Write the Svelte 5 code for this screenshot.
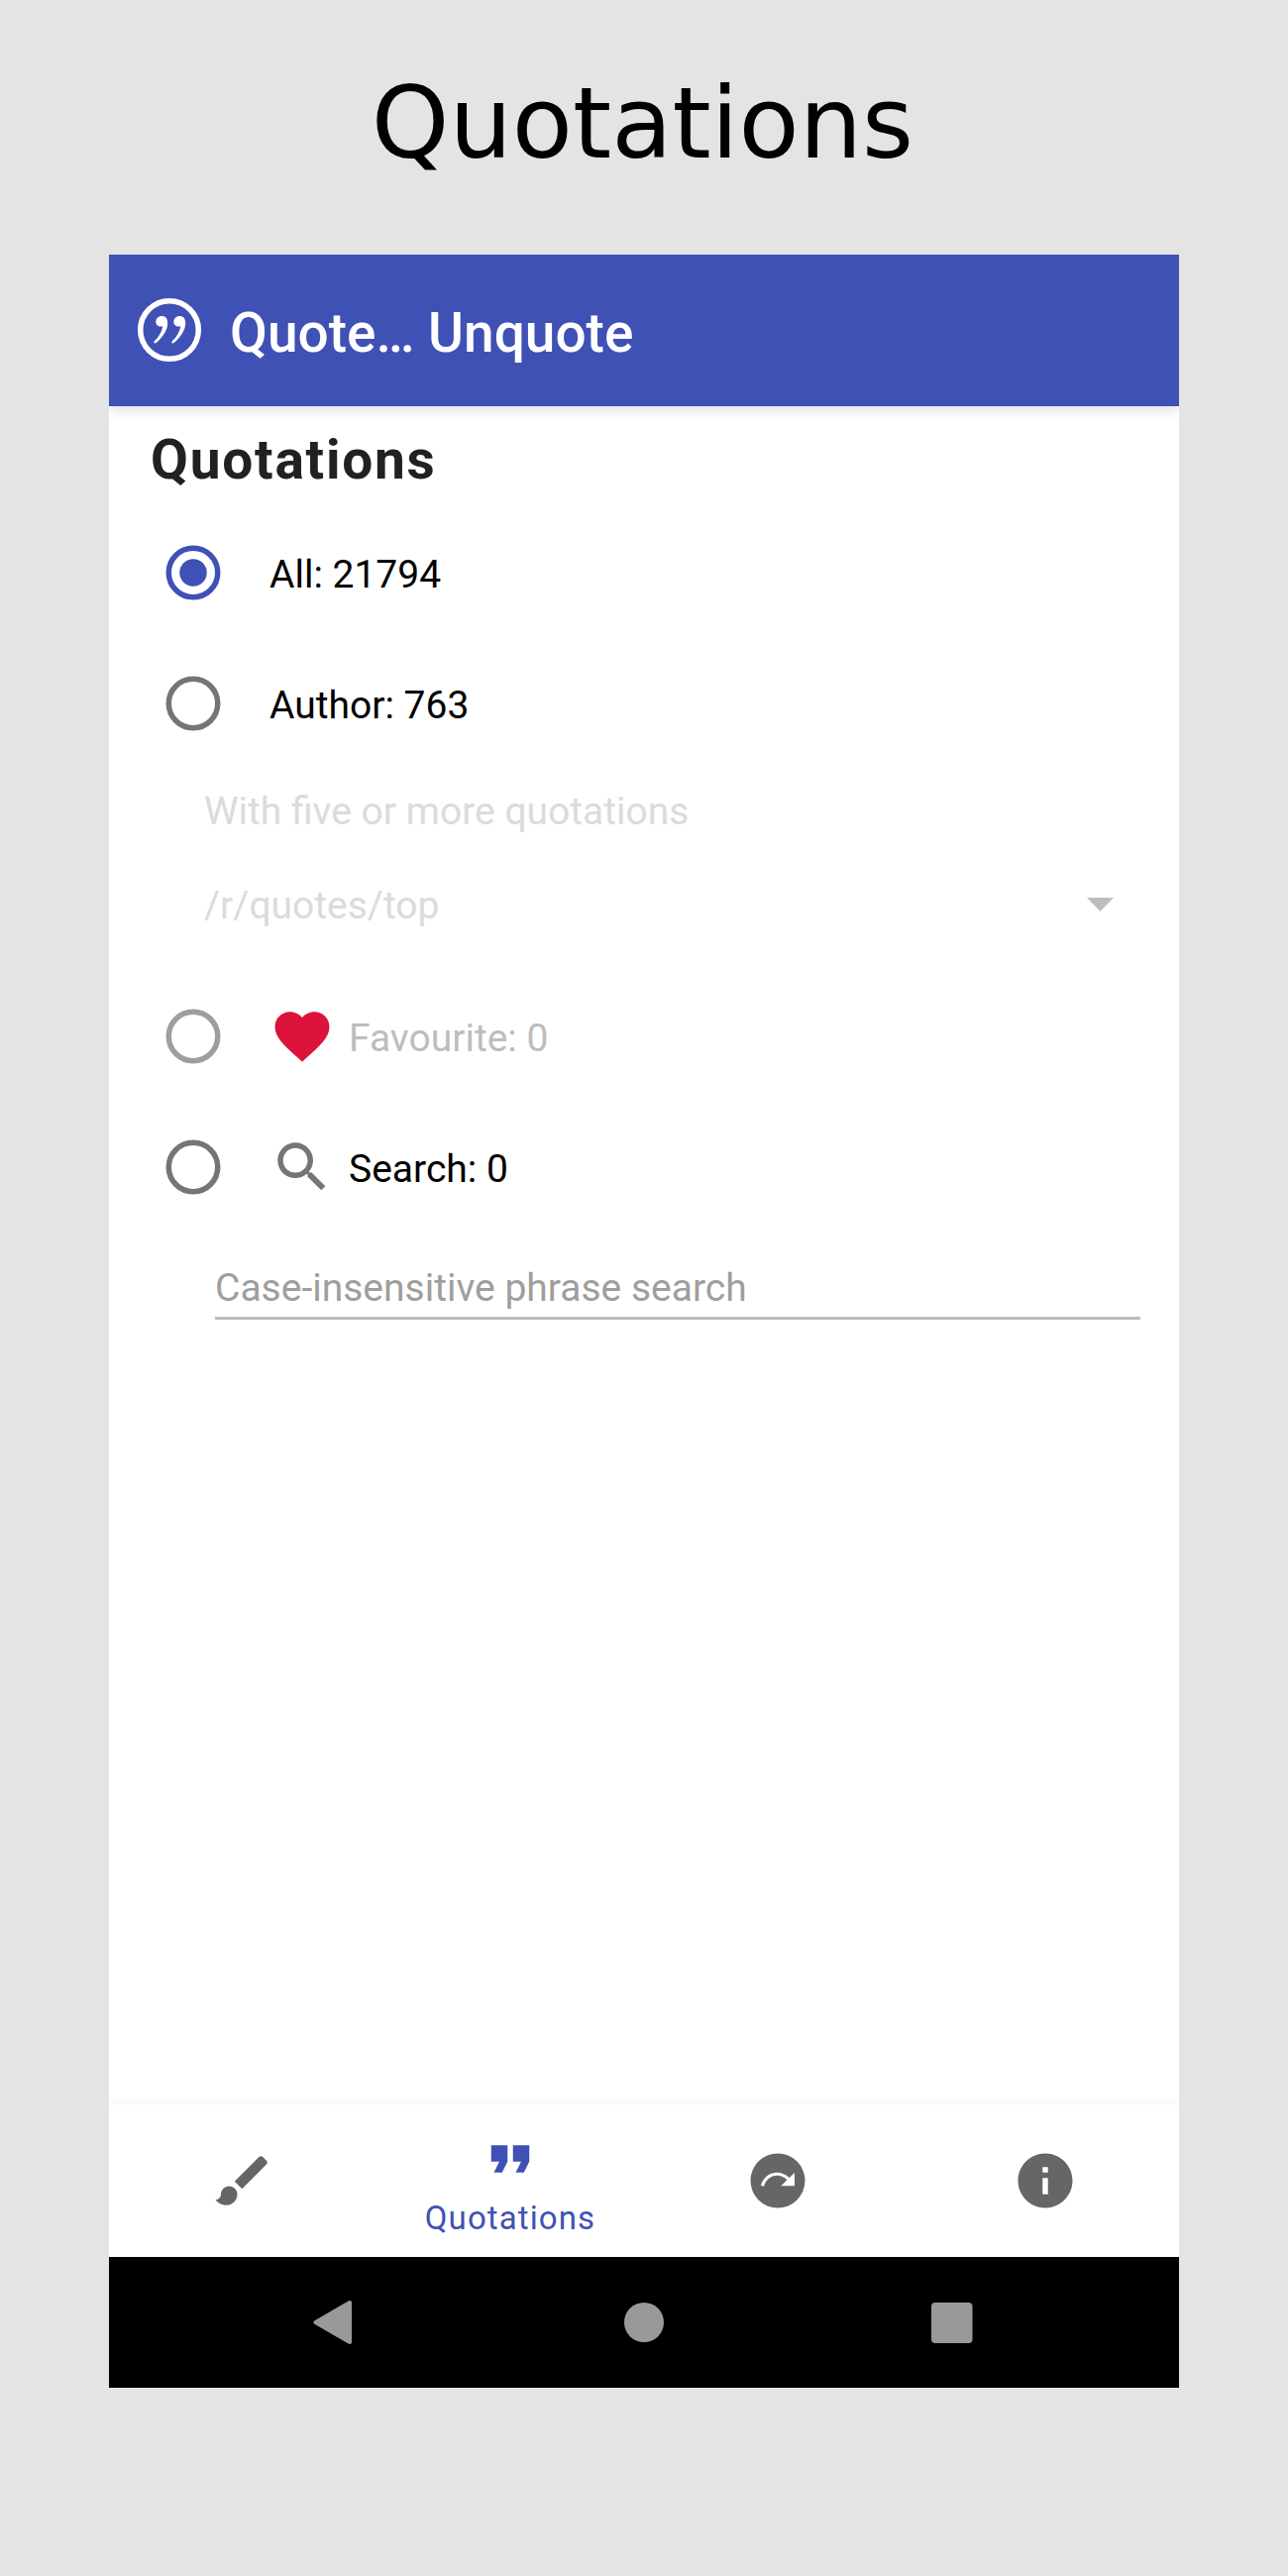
<script>
  const tabs = [
    { id: 'appearance', path: 'M7 14c-1.660 0-3 1.340-3 3 0 1.310-1.160 2-2 2 .92 1.220 2.490 2 4 2 2.210 0 4-1.790 4-4 0-1.660-1.340-3-3-3zm13.710-9.370l-1.340-1.340c-.39-.39-1.020-.39-1.410 0L9 12.250 11.750 15l8.960-8.960c.39-.39.39-1.020 0-1.410z' },
    { id: 'quotations', label: 'Quotations', path: 'M6 17h3l2-4V7H5v6h3zm8 0h3l2-4V7h-6v6h3z' },
    { id: 'schedule' },
    { id: 'about', path: 'M12 2C6.480 2 2 6.480 2 12s4.480 10 10 10 10-4.480 10-10S17.520 2 12 2zm1 15h-2v-6h2v6zm0-8h-2V7h2v2z' }
  ];
</script>

{#snippet radio(checked)}
  <svg class="icon" viewBox="0 0 24 24">
    <circle cx="12" cy="12" r="9" fill="none" stroke="currentColor" stroke-width="2" />
    {#if checked}<circle cx="12" cy="12" r="5" />{/if}
  </svg>
{/snippet}

{#snippet comma()}
  <path d="M25.500 19c4 0 5.700 3 5.700 7 0 7-5 15-12 20.200-1.500.8-2.600-.8-1.400-1.900C22.500 40 25.300 35 26.300 29.300 22.500 30.500 19.300 28 19.300 25c0-3.500 2.600-6 6.200-6z" />
{/snippet}

<div class="page">
  <h1>Quotations</h1>
  <div class="phone">
    <header>
      <svg class="logo" viewBox="0 0 66 66">
        <circle cx="33" cy="33" r="29.300" fill="none" stroke="#fff" stroke-width="5.500" />
        <g fill="#fff">
          {@render comma()}
          <g transform="translate(18 0)">{@render comma()}</g>
        </g>
      </svg>
      <span class="app-name">Quote… Unquote</span>
    </header>

    <main>
      <h2>Quotations</h2>
      <div class="row selected">{@render radio(true)}<span class="text">All: 21794</span></div>
      <div class="row">{@render radio(false)}<span class="text">Author: 763</span></div>
      <div class="author">
        <div class="hint">With five or more quotations</div>
        <div class="select">
          <span>/r/quotes/top</span>
          <svg class="caret" viewBox="0 0 27 14"><path d="M0 0h27L13.500 14z" /></svg>
        </div>
      </div>
      <div class="row disabled">
        {@render radio(false)}
        <svg class="icon lead heart" viewBox="0 0 24 24"><path d="M12 21.350l-1.450-1.320C5.400 15.360 2 12.280 2 8.500 2 5.420 4.420 3 7.500 3c1.740 0 3.410.81 4.500 2.090C13.090 3.810 14.760 3 16.500 3 19.580 3 22 5.420 22 8.500c0 3.780-3.400 6.860-8.550 11.540z" /></svg>
        <span class="text">Favourite: 0</span>
      </div>
      <div class="row">
        {@render radio(false)}
        <svg class="icon lead" viewBox="0 0 24 24"><path d="M15.500 14h-.79l-.28-.27C15.410 12.590 16 11.110 16 9.500 16 5.910 13.090 3 9.500 3S3 5.910 3 9.500 5.910 16 9.500 16c1.610 0 3.090-.59 4.230-1.570l.27.28v.79l5 4.990L20.490 19zm-6 0C7.010 14 5 11.990 5 9.500S7.010 5 9.500 5 14 7.010 14 9.500 11.990 14 9.500 14z" /></svg>
        <span class="text">Search: 0</span>
      </div>
      <div class="field"><span>Case-insensitive phrase search</span></div>
    </main>

    <nav class="tabs">
      {#each tabs as tab (tab.id)}
        <div class="tab" class:active={tab.label}>
          <svg class="icon" viewBox="0 0 24 24">
            {#if tab.path}
              <path d={tab.path} />
            {:else}
              <circle cx="12" cy="12" r="10" />
              <path d="M6.300 13.900C7.100 11.200 9.200 9.550 11.600 9.550c1.700 0 3.100.65 4.300 1.850" fill="none" stroke="#fff" stroke-width="1.100" />
              <path d="M18.150 9.100v4.850h-4.950z" fill="#fff" />
            {/if}
          </svg>
          {#if tab.label}<span>{tab.label}</span>{/if}
        </div>
      {/each}
    </nav>

    <div class="system">
      <svg viewBox="0 0 46 46"><path d="M37 3v40L2.500 23z" stroke="#999" stroke-width="4" stroke-linejoin="round" /></svg>
      <svg viewBox="0 0 46 46"><circle cx="23" cy="23" r="20" /></svg>
      <svg viewBox="0 0 46 46"><rect x="2" y="3" width="41.500" height="41" rx="4" /></svg>
    </div>
  </div>
</div>

<style>
  :global(body) { background: #e4e4e4; }
  .page {
    box-sizing: border-box;
    width: 1300px;
    height: 2600px;
    background: #e4e4e4;
    font-family: Roboto, "Liberation Sans", sans-serif;
    display: flex;
    flex-direction: column;
    align-items: center;
  }
  h1 {
    margin: 0 3px 0 0;
    height: 257px;
    box-sizing: border-box;
    padding-top: 67px;
    font: 400 100px/116px "DejaVu Sans", sans-serif;
    color: #000;
  }
  .phone { width: 1080px; height: 2153px; display: flex; flex-direction: column; background: #fff; }
  header {
    height: 153px;
    flex: none;
    box-sizing: border-box;
    padding-left: 28px;
    display: flex;
    align-items: center;
    background: #3f51b5;
    box-shadow: 0 4px 12px rgba(0, 0, 0, 0.12);
    clip-path: inset(0 0 -24px 0);
  }
  .logo { width: 66px; height: 66px; margin: 0 28px 2px 0; }
  .app-name { font-size: 55px; line-height: 64px; font-weight: 500; color: #fff; padding-top: 4px; }
  main { flex: 1; min-height: 0; }
  h2 {
    margin: 0;
    height: 102px;
    box-sizing: border-box;
    padding: 22px 0 0 42px;
    font-size: 55px;
    line-height: 64px;
    font-weight: 700;
    letter-spacing: 1.750px;
    color: #212121;
  }
  .row { height: 132px; padding-left: 52px; display: flex; align-items: center; color: #757575; }
  .icon { width: 66px; height: 66px; flex: none; fill: currentColor; }
  .lead { margin-left: 44px; }
  .heart { color: #dc143c; }
  .text { margin-left: 44px; padding-top: 3px; font-size: 39px; line-height: 46px; color: #000; }
  .lead + .text { margin-left: 14px; }
  .selected { color: #3f51b5; }
  .disabled { color: #9e9e9e; }
  .disabled .text { color: #bdbdbd; }
  .author { height: 204px; box-sizing: border-box; padding: 20px 66px 0 96px; font-size: 39px; line-height: 46px; color: #dbdbdb; }
  .select { margin-top: 49px; display: flex; justify-content: space-between; align-items: center; }
  .caret { width: 27px; height: 14px; margin-bottom: 3px; fill: #bdbdbd; }
  .field {
    margin: 33px 39px 0 107px;
    height: 52px;
    border-bottom: 3px solid #bdbdbd;
    font-size: 39px;
    line-height: 46px;
    color: #9e9e9e;
  }
  .tabs { height: 154px; flex: none; display: grid; grid-template-columns: repeat(4, 270px); box-shadow: 0 -2px 8px rgba(0, 0, 0, 0.05); clip-path: inset(-16px 0 0 0); background: #fff; }
  .tab { display: flex; flex-direction: column; align-items: center; justify-content: center; color: #666; }
  .active { color: #3f51b5; justify-content: flex-start; padding-top: 22px; }
  .tab span { font-size: 33px; line-height: 40px; letter-spacing: 1.100px; margin-top: 7px; }
  .system { height: 132px; flex: none; display: grid; grid-template-columns: repeat(3, 46px); column-gap: 265px; justify-content: center; align-items: center; background: #000; }
  .system svg { width: 46px; height: 46px; fill: #999; }
</style>
